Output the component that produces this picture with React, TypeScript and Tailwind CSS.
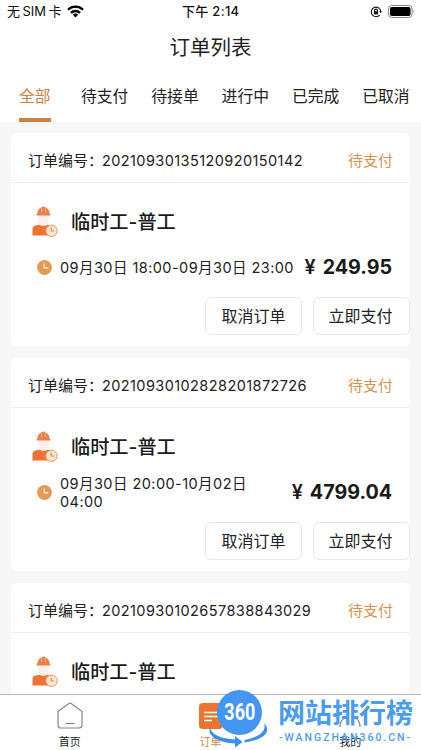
import React from 'react';

const sans = "font-['Inter','Noto_Sans_CJK_SC',sans-serif]";

type Order = { no: string; time: string; price: string };

const orders: Order[] = [
  { no: '20210930135120920150142', time: '09月30日 18:00-09月30日 23:00', price: '249.95' },
  { no: '20210930102828201872726', time: '09月30日 20:00-10月02日 04:00', price: '4799.04' },
  { no: '20210930102657838843029', time: '09月30日 20:00-10月02日 04:00', price: '4799.04' },
];

const tabs = ['待支付', '待接单', '进行中', '已完成', '已取消'];

function StatusBar() {
  return (
    <div className="flex h-[23px] items-center text-[13px] leading-none text-[#111]">
      <div className="flex w-[175px] items-center pl-[7px]">
        <span className="w-[60px] whitespace-nowrap">无<span className="mx-[2.5px]">SIM</span>卡</span>
        <svg width="17" height="13" viewBox="0 0 17 13" fill="none" stroke="#000" strokeWidth="2.3">
          <path d="M1 4.8a10.6 10.6 0 0 1 15 0" />
          <path d="M3.9 7.9a6.5 6.5 0 0 1 9.2 0" />
          <path d="M8.5 12.4 5.9 9.8a3.7 3.7 0 0 1 5.2 0Z" fill="#000" stroke="none" />
        </svg>
      </div>
      <span className="w-[195px] whitespace-nowrap pl-[7px] font-medium tracking-[0.3px]">下午 2:14</span>
      <svg width="12" height="12" viewBox="0 0 12 12" fill="none" stroke="#111" strokeWidth="1.1">
        <path d="M9.5 2.6A4.8 4.8 0 1 0 9.6 9.2" />
        <path d="M9.5 2.6q1.2 1.3 1.3 3" />
        <path d="M9.2 5.3h2.8l-1.3 2Z" fill="#111" stroke="none" />
        <path d="M4.5 5.4V4.6a1.5 1.5 0 0 1 3 0v.8" />
        <rect x="3.9" y="5.2" width="4.2" height="3.2" fill="#111" stroke="none" />
      </svg>
      <svg className="ml-[6px]" width="28" height="13" viewBox="0 0 28 13">
        <rect x=".5" y=".5" width="23.5" height="12" rx="3.3" fill="none" stroke="#888" />
        <rect x="2" y="2" width="20.5" height="9" rx="1.8" fill="#000" />
        <path d="M25.4 4.3q1.7 2.1 0 4.2Z" fill="#888" />
      </svg>
    </div>
  );
}

function Worker() {
  return (
    <svg width="30" height="32" viewBox="0 0 30 32">
      <path d="M9 10h11v5c0 4-2.5 6.5-5.5 6.5S9 19 9 15Z" fill="#fcf0ea" />
      <path d="M8.300 8.700c.2-3.200 1.700-5.300 4.200-6.100l.3-.9h3.400l.3.900c2.500.8 4 2.900 4.200 6.100l.7.400v1.500H7.600V9.100Z" fill="#ed8048" />
      <path d="M12.600 3v4.300M16.400 3v4.300" stroke="#f9c3a4" strokeWidth=".8" />
      <path d="M3.500 30.500V24q0-3 3-3.600l4-.7q4 2.500 8 0l4 .8v10Z" fill="#ef7134" />
      <circle cx="22.500" cy="25.800" r="5.700" fill="#fbe7cf" stroke="#eb9a58" strokeWidth="1" />
      <path d="M22.200 22.500V26h3.200" fill="none" stroke="#dc8f4f" strokeWidth="1.2" />
    </svg>
  );
}

function Clock() {
  return (
    <svg className="shrink-0" width="15" height="15" viewBox="0 0 15 15">
      <circle cx="7.5" cy="7.5" r="7.4" fill="#e69a55" />
      <path d="M7.3 3.5v4.300h4" fill="none" stroke="#fff3e3" strokeWidth="1.2" />
    </svg>
  );
}

function OrderCard({ order }: { order: Order }) {
  return (
    <section className="h-[213px] w-[399px] shrink-0 rounded-[6px] bg-white">
      <div className="flex h-[50px] items-center justify-between border-b border-[#eeeeee] pt-[7px] pr-[17px] pl-[17px]">
        <div className="flex items-center whitespace-nowrap text-[#222]">
          <span className="w-[74px] text-[15px]">订单编号：</span>
          <span className="text-[14.5px] tracking-[0.41px]">{order.no}</span>
        </div>
        <span className="text-[15px] text-[#d9924a]">待支付</span>
      </div>
      <div className="flex h-[66px] items-center pl-[18px]">
        <div className="mt-[9px]"><Worker /></div>
        <h2 className="mt-[13px] ml-[12px] text-[19.2px] font-medium text-[#1a1a1a]">临时工-普工</h2>
      </div>
      <div className="flex h-[37px] items-center pr-[18px] pl-[26px]">
        <Clock />
        <div className="ml-[8px] w-[238px] text-[14.5px] leading-[17.5px] tracking-[0.44px] text-[#222]">{order.time}</div>
        <div className="flex flex-1 justify-end whitespace-nowrap text-[19.7px] font-bold text-[#1a1a1a]">
          <span className="mr-[7px] font-semibold">¥</span>
          <span>{order.price}</span>
        </div>
      </div>
      <div className="mt-[11px] flex justify-end gap-[11px]">
        <button className="h-[38px] w-[97px] rounded-[6px] border border-[#e7e7e7] text-[16px] text-[#222]">取消订单</button>
        <button className="h-[38px] w-[97px] rounded-[6px] border border-[#e7e7e7] pr-[2px] text-[16px] text-[#222]">立即支付</button>
      </div>
    </section>
  );
}

function Watermark() {
  return (
    <div className="absolute top-[690px] left-[208px] flex">
      <div className="relative h-[60px] w-[62px]">
        <div className="ml-[9px] flex h-[45px] w-[45px] items-center justify-center rounded-full bg-[#4397f3] pb-[1px]">
          <span className="scale-x-[0.78] font-['Roboto',sans-serif] text-[23px] leading-[27px] font-bold text-white">360</span>
        </div>
        <svg className="absolute top-[33px] left-0" width="62" height="26" viewBox="0 0 62 26">
          <path d="M2.2 4.5C2.5 11 13 16 27 16.500V13l7.500 6-7.500 5.500v-4C11 20-2 12.500 2.2 4.500Z" fill="#3b91f0" />
          <path d="M56 0c8 8 1 16.500-19.500 19.500v-2.500C50 14.500 59 9 56 0Z" fill="#3b91f0" />
        </svg>
      </div>
      <div className="ml-[8px] flex w-[142px] flex-col items-start text-[#4a9bf2]">
        <span className="mt-[4px] text-[27px] leading-[40px] font-bold whitespace-nowrap">网站排行榜</span>
        <span className="-mt-[3px] ml-[1px] font-['Roboto',sans-serif] text-[10.5px] leading-[13px] font-medium tracking-[2px] whitespace-nowrap">-WANGZHAN360.CN-</span>
      </div>
    </div>
  );
}

function BottomNav() {
  return (
    <nav className="grid h-[56px] shrink-0 grid-cols-3 border-t border-[#b5b8bf] bg-white text-[11px] leading-[14px] text-[#222]">
      <div className="flex flex-col items-center pt-[7px] pr-[1px]">
        <svg width="26" height="27" viewBox="0 0 26 27" fill="none" stroke="#858585" strokeWidth="1.2">
          <path d="M1 9.5 11.8 1.4q1.2-.8 2.4 0L25 9.500V23q0 3-3 3H4q-3 0-3-3Z" />
          <path d="M8.5 21.5h9" />
        </svg>
        <span className="mt-[6px]">首页</span>
      </div>
      <div className="flex flex-col items-center pt-[8px] text-[#d98245]">
        <svg className="ml-[2px]" width="24" height="26" viewBox="0 0 24 26">
          <rect width="24" height="26" rx="4" fill="#ee732e" />
          <path d="M5 9.5h14M5 13.500h14M5 17.500h8" stroke="#fff" strokeWidth="1.6" />
        </svg>
        <span className="mt-[6px]">订单</span>
      </div>
      <div className="flex flex-col items-center pt-[7px] pr-[1px]">
        <svg width="26" height="27" viewBox="0 0 26 27" fill="none" stroke="#858585" strokeWidth="1.2">
          <path d="M3 25v-1a10 10 0 0 1 6.500-9M16.500 15a10 10 0 0 1 6.500 9v1" />
        </svg>
        <span className="mt-[6px]">我的</span>
      </div>
    </nav>
  );
}

export default function App() {
  return (
    <div className={`relative flex h-[750px] w-[421px] flex-col overflow-hidden bg-white ${sans}`}>
      <StatusBar />
      <h1 className="flex h-[48px] items-center justify-center pt-[2px] text-[20.5px] text-[#222]">订单列表</h1>
      <div className="flex h-[51px] shrink-0 text-[15.8px] leading-none whitespace-nowrap text-[#222]">
        <div className="ml-[19px] flex w-[62px] shrink-0 flex-col items-start text-[#cf7f40]">
          <span className="flex h-[47px] w-[32px] items-center pt-[4px]">全部</span>
          <span className="h-[4px] w-[32px] bg-[#cf7f40]" />
        </div>
        {tabs.map((tab) => (
          <span key={tab} className="flex h-[51px] w-[70.3px] shrink-0 items-center last:w-[59px]">{tab}</span>
        ))}
      </div>
      <main className="flex min-h-0 flex-1 flex-col gap-[12px] overflow-hidden bg-[#f7f7f7] pt-[11px] pl-[11px]">
        {orders.map((order) => <OrderCard key={order.no} order={order} />)}
      </main>
      <BottomNav />
      <Watermark />
    </div>
  );
}
